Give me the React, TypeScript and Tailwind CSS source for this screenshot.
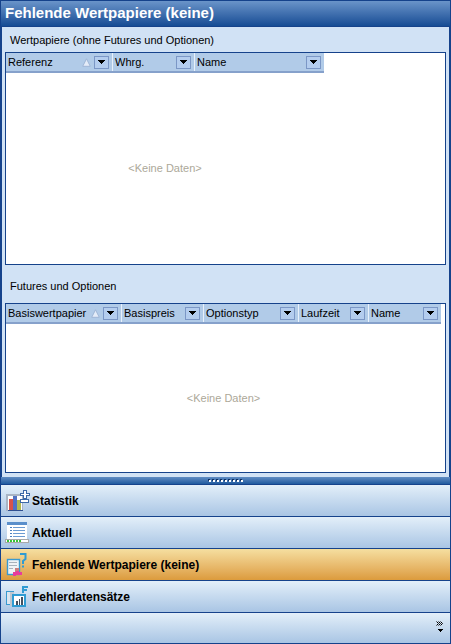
const font = { fontFamily: '"Liberation Sans", Arial, sans-serif' };

function Drop() {
  return (
    <div className="flex h-[13px] w-[15px] shrink-0 items-center justify-center border border-[#7b97c6] bg-[#b4cdee]">
      <svg width="7" height="4" viewBox="0 0 7 4" shapeRendering="crispEdges">
        <path d="M0 0h7v1H6v1H5v1H4v1H3V3H2V2H1V1H0z" fill="#000" />
      </svg>
    </div>
  );
}

function Col({ label, w, sort }: { label: string; w: string; sort?: boolean }) {
  return (
    <div className={`flex h-full shrink-0 items-center border-r border-r-[#e8f0fa] pl-[2px] pr-[3px] ${w}`}>
      <span className="flex-1 whitespace-nowrap text-[11px] text-black">{label}</span>
      {sort && (
        <svg width="9" height="9" viewBox="0 0 9 9" className="mr-[3px] shrink-0">
          <path d="M4.5 0.8 L8.3 8.3 H0.7 Z" fill="#e4ecf8" stroke="#9fb6d6" strokeWidth="1" />
        </svg>
      )}
      <Drop />
    </div>
  );
}

function Grid({ cols, h, w }: { cols: React.ReactNode; h: string; w: string }) {
  return (
    <div className={`mx-[3px] flex flex-col border border-[#15428b] bg-white ${h}`}>
      <div className={`flex h-[20px] shrink-0 border-b-2 border-[#86a1cb] bg-[#b1cbe8] ${w}`}>{cols}</div>
      <div className={`flex flex-1 items-center justify-center text-[11px] text-[#aca899] ${w}`}>&lt;Keine Daten&gt;</div>
    </div>
  );
}

function IconStat() {
  return (
    <svg width="25" height="25" viewBox="0 0 25 25" className="shrink-0" shapeRendering="crispEdges">
      <rect x="1" y="6" width="17" height="17" fill="#a9b5c5" />
      <rect x="3" y="8" width="14" height="14" fill="#fff" />
      <rect x="4" y="11" width="4" height="11" fill="#d9534a" />
      <rect x="8" y="8" width="4" height="14" fill="#5272c4" />
      <rect x="12" y="12" width="4" height="10" fill="#b2b950" />
      <rect x="3" y="22" width="15" height="1" fill="#2f4f8f" />
      <path d="M18 2h3v3h3v2h-3v3h-3V7h-3V5h3z" fill="#fff" stroke="#3d6aa8" strokeWidth="1" />
      <rect x="15.5" y="11.5" width="8" height="3" fill="#fff" stroke="#3d6aa8" strokeWidth="1" />
    </svg>
  );
}

function IconAktuell() {
  return (
    <svg width="25" height="25" viewBox="0 0 25 25" className="shrink-0" shapeRendering="crispEdges">
      <rect x="2" y="2" width="20" height="17" fill="#fff" />
      <rect x="2" y="2" width="20" height="3" fill="#5a8fcb" />
      {[7, 10, 13, 16].map((y) => (
        <g key={y}>
          <rect x="5" y={y} width="2" height="1" fill="#4a7fc0" />
          <rect x="8" y={y} width="12" height="1" fill="#6b9bd2" />
        </g>
      ))}
      <rect x="0" y="19" width="24" height="4" fill="#a8a8a8" />
      <rect x="1" y="20" width="22" height="2" fill="#fff" />
      {[2, 5, 8, 11, 14].map((x) => (
        <rect key={x} x={x} y="20" width="2" height="2" fill="#35c535" />
      ))}
    </svg>
  );
}

function IconMissing() {
  return (
    <svg width="25" height="25" viewBox="0 0 25 25" className="shrink-0">
      <rect x="2.5" y="7.5" width="12" height="15" fill="#f0f3f6" stroke="#3a9ad0" strokeWidth="1.4" />
      <rect x="4" y="10" width="8" height="1" fill="#a9b2bc" />
      <rect x="4" y="13" width="8" height="1" fill="#a9b2bc" />
      <rect x="4" y="16" width="4" height="1" fill="#a9b2bc" />
      <rect x="10" y="16" width="4" height="4" fill="#c98080" />
      <path d="M8 20h3v-1h3v1h3v3h-6v1H8z" fill="#e83c9c" />
      <path d="M15 2h5.5v5L18 9v3" fill="none" stroke="#2f9bd2" strokeWidth="2" />
      <rect x="17" y="13.5" width="2" height="2" fill="#2f9bd2" />
    </svg>
  );
}

function IconFehler() {
  return (
    <svg width="25" height="25" viewBox="0 0 25 25" className="shrink-0" shapeRendering="crispEdges">
      <rect x="1.5" y="7.5" width="7" height="13" fill="#dce6f0" stroke="#3a9ad0" />
      <rect x="5" y="8" width="4" height="14" fill="#bfc7d0" />
      <rect x="8" y="11" width="12" height="11" fill="#fff" stroke="#2f9bd2" strokeWidth="2" />
      <rect x="11" y="17" width="2" height="4" fill="#44505f" />
      <rect x="14" y="15" width="1" height="6" fill="#44505f" />
      <rect x="16" y="13" width="2" height="8" fill="#44505f" />
      <path d="M18 9V3h5M18 6h4" fill="none" stroke="#2f9bd2" strokeWidth="2" />
    </svg>
  );
}

function NavItem({ icon, label, active }: { icon: React.ReactNode; label: string; active?: boolean }) {
  return (
    <div
      className={`flex h-[32px] shrink-0 items-center gap-[2px] border-b border-[#15428b] pl-[4px] ${
        active ? 'bg-gradient-to-b from-[#f5dfa0] to-[#dc9b3c]' : 'bg-gradient-to-b from-[#e3eff9] to-[#a9c5e4]'
      }`}
    >
      {icon}
      <span className="whitespace-nowrap text-[12px] font-bold text-black">{label}</span>
    </div>
  );
}

export default function App() {
  return (
    <div className="flex h-[644px] w-[451px] flex-col overflow-hidden bg-[#d1e2f5]" style={font}>
      <div className="flex h-[27px] shrink-0 items-center border border-[#15428b] bg-gradient-to-b from-[#6a94c9] to-[#154c94] pl-[4px]">
        <span className="whitespace-nowrap text-[15px] font-bold text-white">Fehlende Wertpapiere (keine)</span>
      </div>
      <div className="flex h-[450px] flex-col border-x-2 border-[#15428b]">
        <div className="flex h-[25px] shrink-0 items-center pl-[8px] pt-[1px] text-[11px] text-black">Wertpapiere (ohne Futures und Optionen)</div>
        <Grid
          h="h-[213px]"
          w="w-[318px]"
          cols={
            <>
              <Col label="Referenz" w="w-[107px]" sort />
              <Col label="Whrg." w="w-[82px]" />
              <Col label="Name" w="w-[129px] border-r-0" />
            </>
          }
        />
        <div className="flex h-[38px] shrink-0 items-center pl-[8px] pt-[4px] text-[11px] text-black">Futures und Optionen</div>
        <Grid
          w="w-[435px]"
          h="h-[170px]"
          cols={
            <>
              <Col label="Basiswertpapier" w="w-[116px]" sort />
              <Col label="Basispreis" w="w-[82px]" />
              <Col label="Optionstyp" w="w-[95px]" />
              <Col label="Laufzeit" w="w-[70px]" />
              <Col label="Name" w="w-[72px] border-r-0" />
            </>
          }
        />
      </div>
      <div className="flex h-[167px] shrink-0 flex-col border-x border-[#15428b]">
        <div className="flex h-[8px] shrink-0 items-center justify-center gap-[2px] border-b border-[#15428b] bg-gradient-to-b from-[#5f8cc3] to-[#1f5a9e]">
          {[0, 1, 2, 3, 4, 5, 6, 7, 8].map((i) => (
            <span key={i} className="h-[2px] w-[2px] bg-white shadow-[-1px_-1px_0_#0f2f60]" />
          ))}
        </div>
        <NavItem icon={<IconStat />} label="Statistik" />
        <NavItem icon={<IconAktuell />} label="Aktuell" />
        <NavItem active icon={<IconMissing />} label="Fehlende Wertpapiere (keine)" />
        <NavItem icon={<IconFehler />} label="Fehlerdatensätze" />
        <div className="flex flex-1 justify-end border-b border-[#15428b] bg-gradient-to-b from-[#e3eff9] to-[#a9c5e4] pr-[6px] pt-[8px]">
          <div className="flex flex-col items-center gap-[3px]">
            <svg width="8" height="5" viewBox="0 0 8 5" fill="none" stroke="#000" strokeWidth="1">
              <path d="M0.5 0.5 L2.5 2.5 L0.5 4.5 M2.5 0.5 L4.5 2.5 L2.5 4.5 M4.5 0.5 L6.5 2.5 L4.5 4.5" />
            </svg>
            <svg width="5" height="3" viewBox="0 0 5 3" shapeRendering="crispEdges">
              <path d="M0 0h5v1H4v1H3v1H2V2H1V1H0z" fill="#000" />
            </svg>
          </div>
        </div>
      </div>
    </div>
  );
}
